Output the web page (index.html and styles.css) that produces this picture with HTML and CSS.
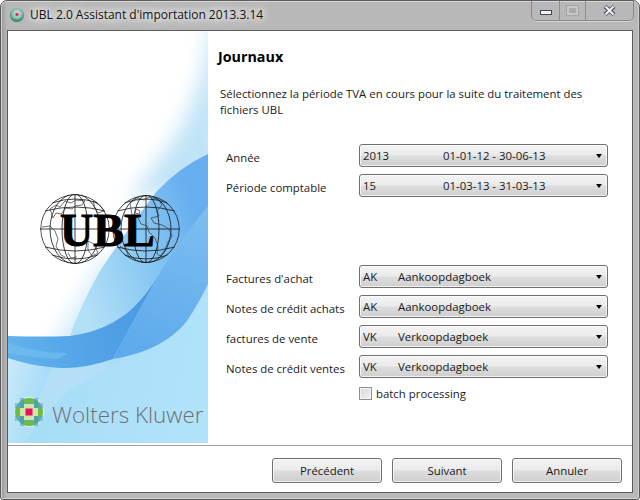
FILE: index.html
```html
<!DOCTYPE html>
<html lang="fr">
<head>
<meta charset="utf-8">
<title>UBL 2.0 Assistant d'importation 2013.3.14</title>
<link rel="stylesheet" href="styles.css">
</head>
<body>
<div class="window">
  <header class="titlebar">
    <svg class="app-icon" width="16" height="16" viewBox="0 0 16 16">
      <defs>
        <radialGradient id="appg" cx="50%" cy="40%" r="60%">
          <stop offset="0" stop-color="#e8e8e0"/><stop offset="0.55" stop-color="#8cc4b0"/><stop offset="1" stop-color="#2a6a80"/>
        </radialGradient>
      </defs>
      <circle cx="8" cy="8" r="7" fill="url(#appg)"/>
      <path d="M1.800 11a7 7 0 0 0 12.400 0q-6 3-12.400 0z" fill="#3f9a4a" opacity=".8"/>
      <circle cx="8" cy="7.500" r="1.800" fill="#e0306a"/>
    </svg>
    <span class="title">UBL 2.0 Assistant d'importation 2013.3.14</span>
    <div class="caption">
      <span class="cap cap-min"><i class="min-glyph"></i></span>
      <span class="cap cap-max"><i class="max-glyph"></i></span>
      <span class="cap cap-close">
        <svg width="13" height="11" viewBox="0 0 13 11"><path d="M2 1.500l9 8M11 1.500l-9 8" stroke="#4a5060" stroke-width="4"/><path d="M2.500 1.500l8 8M10.500 1.500l-8 8" stroke="#f4f4f4" stroke-width="2"/></svg>
      </span>
    </div>
  </header>
  <div class="client">
    <div class="main">
      <aside class="side">
        <svg width="200" height="412" viewBox="0 0 200 412">
          <defs>
            <linearGradient id="wing" gradientUnits="userSpaceOnUse" x1="70" y1="260" x2="200" y2="220">
              <stop offset="0" stop-color="#b4e0f7"/><stop offset="0.5" stop-color="#8ccaf3"/><stop offset="1" stop-color="#66aeee"/>
            </linearGradient>
            <linearGradient id="band" gradientUnits="userSpaceOnUse" x1="0" y1="320" x2="150" y2="280">
              <stop offset="0" stop-color="#62b2ec"/><stop offset="0.45" stop-color="#54a5e8"/><stop offset="1" stop-color="#4a98e2"/>
            </linearGradient>
            <linearGradient id="crease" gradientUnits="userSpaceOnUse" x1="190" y1="170" x2="130" y2="320">
              <stop offset="0" stop-color="#7cbff1"/><stop offset="1" stop-color="#5faaec"/>
            </linearGradient>
            <linearGradient id="low" x1="0" y1="0" x2="1" y2="0.2">
              <stop offset="0" stop-color="#d8effb"/><stop offset="0.3" stop-color="#a8ddf7"/><stop offset="1" stop-color="#b0e3fa"/>
            </linearGradient>
            <filter id="b1" x="-10%" y="-10%" width="120%" height="120%"><feGaussianBlur stdDeviation=".6"/></filter>
            <filter id="b2" x="-60%" y="-60%" width="220%" height="220%"><feGaussianBlur stdDeviation="10"/></filter>
            <clipPath id="left"><circle cx="67" cy="198" r="35"/></clipPath>
            <clipPath id="right"><circle cx="138" cy="198" r="34"/></clipPath>
          </defs>
          <rect width="200" height="412" fill="#fff"/>
          <path d="M205 -30Q200 70 150 130L120 170L215 150V-30z" fill="#bfe3f7" filter="url(#b2)"/>
          <path d="M100 220L40 320L60 330L130 240z" fill="#d4ecfa" filter="url(#b2)"/>
          <path d="M0 322L60 335L140 310L200 245V412H0z" fill="url(#low)"/>
          <path d="M200 123Q172 136 149 160Q115 205 92 240Q72 275 62 305L40 345L14 412Q40 380 60 360L105 335L200 253z" fill="url(#wing)" filter="url(#b1)"/>
          <path d="M0 305Q35 306 62 305Q100 300 125 277Q140 262 150 245L105 328Q70 340 42 336Q20 334 0 327z" fill="url(#band)" filter="url(#b1)"/>
          <path d="M150 245L105 328Q155 320 179 290Q192 270 200 253V175Q175 205 150 245z" fill="url(#crease)" filter="url(#b1)"/>
          <path d="M0 312Q30 322 60 322L50 328Q20 326 0 322z" fill="#74c0f0" opacity=".6"/>

          <g class="globe" clip-path="url(#left)">
            <circle cx="67" cy="198" r="34.300"/>
            <ellipse cx="67" cy="198" rx="13" ry="35"/>
            <ellipse cx="67" cy="198" rx="25" ry="35"/>
            <path d="M67 163V233M32 198H102M37 180Q67 172 97 180M37 216Q67 224 97 216M44 172Q67 164 90 172M44 224Q67 232 90 224"/>
            <path class="land" d="M42 178l6-4 4 2 5-6 6 2 5-3 9 1-3 4-7 1-3 3-6-1-5 6-5-1-3 5zM34 196l8-1 5 5 3 8-2 7 5 9 4 2M85 170l8 5 3 5-6 2-3-5zM80 210l6 3 4 9-6 3-4-6zM60 222l3 5 6-1"/>
          </g>
          <g class="globe" clip-path="url(#right)">
            <circle cx="138" cy="198" r="33.300"/>
            <ellipse cx="138" cy="198" rx="13" ry="34"/>
            <ellipse cx="138" cy="198" rx="25" ry="34"/>
            <path d="M138 164V232M104 198H172M109 180Q138 172 167 180M109 216Q138 224 167 216M116 172Q138 164 160 172M116 224Q138 232 160 224"/>
            <path class="land" d="M122 172l8-5 6 2 6-3 9 3 3 5-5 6 2 5-8 2 3 5 8 2 7 4 3 7-4 6-3 8-5 6-3-2 1-8-3-8-6-6-2-6-6-2-3-6-6-3zM112 215l6 4 3 7M128 178l4 2-1 3-4-1z"/>
          </g>
          <text class="ubl" x="52" y="215">UBL</text>

          <g>
            <circle cx="21" cy="381" r="15" fill="#dcecf6"/>
            <circle cx="21" cy="381" r="14" fill="#6cbc44"/>
            <path d="M7 372H35V377H7zM7 385H35V390H7z" fill="#5aa4d8" opacity=".6"/>
            <path d="M12 367H16V395H12zM26 367H30V395H26z" fill="#3f96d0" opacity=".55"/>
            <rect x="16" y="373" width="10" height="16" fill="#cfe6a8"/>
            <rect x="12" y="377" width="18" height="8" fill="#cfe6a8"/>
            <rect x="17.500" y="377.500" width="7" height="7" fill="#e5115f"/>
          </g>
          <text class="wk" x="44" y="392">Wolters Kluwer</text>
        </svg>
      </aside>
      <section class="content">
        <h1 class="heading">Journaux</h1>
        <p class="intro">Sélectionnez la période TVA en cours pour la suite du traitement des<br>fichiers UBL</p>
        <div class="rows rows-top">
          <div class="row"><label class="label">Année</label><div class="combo"><span class="code code-wide">2013</span><span>01-01-12 - 30-06-13</span><i class="arrow"></i></div></div>
          <div class="row"><label class="label">Période comptable</label><div class="combo"><span class="code code-wide">15</span><span>01-03-13 - 31-03-13</span><i class="arrow"></i></div></div>
        </div>
        <div class="rows rows-bottom">
          <div class="row"><label class="label">Factures d'achat</label><div class="combo"><span class="code">AK</span><span>Aankoopdagboek</span><i class="arrow"></i></div></div>
          <div class="row"><label class="label">Notes de crédit achats</label><div class="combo"><span class="code">AK</span><span>Aankoopdagboek</span><i class="arrow"></i></div></div>
          <div class="row"><label class="label">factures de vente</label><div class="combo"><span class="code">VK</span><span>Verkoopdagboek</span><i class="arrow"></i></div></div>
          <div class="row"><label class="label">Notes de crédit ventes</label><div class="combo"><span class="code">VK</span><span>Verkoopdagboek</span><i class="arrow"></i></div></div>
        </div>
        <div class="check-row"><span class="checkbox"></span><span>batch processing</span></div>
      </section>
    </div>
    <footer class="footer">
      <button class="btn">Précédent</button>
      <button class="btn">Suivant</button>
      <button class="btn">Annuler</button>
    </footer>
  </div>
</div>
</body>
</html>
```

FILE: styles.css
```css
* { box-sizing: border-box; }
html, body { margin: 0; padding: 0; background: #fff; }
body { font-family: "Open Sans", "Noto Sans", sans-serif; font-size: 11.400px; color: #1a1a1a; }

.window {
  width: 640px; height: 500px;
  display: flex; flex-direction: column;
  padding: 0 6px 6px 6px;
  border: 1px solid #5c5c5c;
  border-radius: 7px 7px 3px 3px;
  background: linear-gradient(90deg, #9a9a9a 0, #b8b8b8 6px, #b8b8b8 100%);
  box-shadow: inset 0 1px 0 #d8d8d8, inset 1px 0 0 #d0d0d0, inset -1px 0 0 #d0d0d0, inset 0 -1px 0 #d0d0d0;
}

.titlebar { height: 29px; display: flex; align-items: flex-start; flex: none; }
.app-icon { margin: 6px 5px 0 2px; flex: none; }
.title { margin-top: 5px; font-size: 12px; color: #111; text-shadow: 0 0 6px #fff, 0 0 10px #fff, 0 0 14px #eee; }
.caption {
  margin-left: auto; height: 20px; display: flex;
  margin-right: -1px;
  border: 1px solid #8a8a8a; border-top: 0;
  border-radius: 0 0 5px 5px;
  box-shadow: 0 1px 0 #d4d4d4;
}
.cap { display: flex; align-items: center; justify-content: center; }
.cap-min { width: 28px; border-right: 1px solid #8e8e8e; }
.cap-max { width: 26px; border-right: 1px solid #8e8e8e; }
.cap-close { width: 47px; }
.min-glyph { width: 12px; height: 5px; background: #f2f2f2; border: 1px solid #3f4658; margin-top: 4px; }
.max-glyph { width: 11px; height: 9px; border: 2px solid #c8c8c8; outline: 1px solid #a4a4a4; background: #aaa; }

.client {
  flex: 1; display: flex; flex-direction: column; min-height: 0;
  background: #fff; border: 1px solid #5a5a5a;
}
.main { height: 414px; flex: none; display: flex; }
.side { width: 200px; height: 412px; flex: none; }
.side svg { display: block; }

.globe { fill: none; stroke: #111; stroke-width: .8; }
.globe .land { stroke-width: .7; stroke: #333; }
.ubl { font-family: "Liberation Serif", serif; font-weight: 700; font-size: 46px; fill: #000; stroke: #000; stroke-width: 1; }
.wk { font-family: "Open Sans", sans-serif; font-weight: 300; font-size: 22.400px; fill: #6f6f72; }

.content { flex: 1; padding-left: 10px; }
.heading { margin: 16px 0 0; font-size: 14.300px; font-weight: 700; line-height: 20px; color: #000; }
.intro { margin: 19px 0 0 2px; line-height: 16px; }
.rows { margin-left: 8px; width: 390px; display: flex; flex-direction: column; gap: 7px; }
.rows-top { margin-top: 26px; }
.rows-bottom { margin-top: 68px; }
.row { display: flex; align-items: center; height: 23px; }
.label { width: 133px; flex: none; padding-top: 3px; }
.combo {
  width: 249px; height: 23px; display: flex; align-items: center;
  padding: 0 5px 0 3px;
  border: 1px solid #707070; border-radius: 3px;
  background: linear-gradient(#f3f3f3 0, #ebebeb 48%, #dddddd 52%, #cfcfcf 100%);
  box-shadow: inset 0 0 0 1px rgba(255,255,255,.7);
}
.code { width: 35px; flex: none; }
.code-wide { width: 80px; }
.arrow { margin-left: auto; width: 0; height: 0; border: 3.500px solid transparent; border-top: 4px solid #000; border-bottom: 0; }

.check-row { margin: 7px 0 0 141px; display: flex; align-items: center; gap: 4px; height: 16px; }
.checkbox { width: 13px; height: 13px; border: 1px solid #8e8f8f; background: linear-gradient(135deg, #d8d8d8, #f2f2f2); box-shadow: inset 0 0 0 1px #f4f4f4; }

.footer { flex: 1; display: flex; justify-content: flex-end; gap: 10px; padding: 12px 10px 0 0; border-top: 1px solid #a0a0a0; }
.btn {
  width: 110px; height: 25px; padding: 0;
  font: inherit; color: #1a1a1a;
  border: 1px solid #707070; border-radius: 3px;
  background: linear-gradient(#f3f3f3 0, #ebebeb 48%, #dddddd 52%, #cfcfcf 100%);
  box-shadow: inset 0 0 0 1px rgba(255,255,255,.7);
}
```
